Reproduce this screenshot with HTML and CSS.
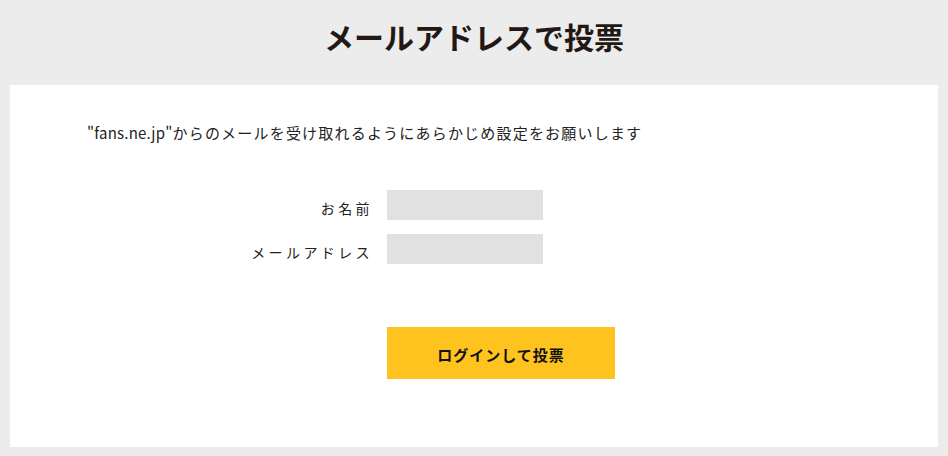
FILE: index.html
```html
<!DOCTYPE html>
<html lang="ja">
<head>
<meta charset="utf-8">
<title>メールアドレスで投票</title>
<link rel="stylesheet" href="styles.css">
</head>
<body>
<header class="page-header">
  <h1 class="page-title">メールアドレスで投票</h1>
</header>
<main class="card">
  <p class="notice"><span class="domain">"fans.ne.jp"</span>からのメールを受け取れるようにあらかじめ設定をお願いします</p>
  <form class="form">
    <label class="label" for="name">お名前</label>
    <input class="input" id="name" type="text">
    <label class="label" for="mail">メールアドレス</label>
    <input class="input" id="mail" type="email">
    <button class="submit" type="button">ログインして投票</button>
  </form>
</main>
</body>
</html>
```
FILE: styles.css
```css
* { box-sizing: border-box; }
html, body { margin: 0; padding: 0; }
body {
  background: #ececec;
  font-family: "Noto Sans CJK JP", "Noto Sans", sans-serif;
  color: #231815;
  height: 456px;
  overflow: hidden;
}
.page-header {
  height: 85px;
  display: flex;
  align-items: center;
  justify-content: center;
}
.page-title {
  margin: 0;
  font-size: 30px;
  font-weight: 700;
  letter-spacing: 0;
  color: #231815;
  padding-bottom: 13px;
}
.card {
  background: #fff;
  margin: 0 10px;
  height: 362px;
  padding: 36px 0 0 77px;
}
.notice {
  margin: 0;
  font-size: 15px;
  line-height: 24px;
  letter-spacing: 1.2px;
  color: #222;
}
.domain {
  letter-spacing: 0.2px;
}
.form {
  margin-top: 45px;
  margin-left: -77px;
  display: grid;
  grid-template-columns: 363px 156px;
  column-gap: 14px;
  row-gap: 14px;
  align-items: center;
}
.label {
  justify-self: end;
  font-size: 14px;
  letter-spacing: 3.4px;
  padding-top: 5px;
  color: #222;
}
.input {
  width: 156px;
  height: 30px;
  border: 0;
  background: #e1e1e1;
  margin: 0;
  padding: 0 8px;
  font: inherit;
}
.submit {
  grid-column: 2;
  margin-top: 49px;
  width: 228px;
  height: 52px;
  border: 0;
  background: #fec31e;
  font-family: inherit;
  font-size: 15px;
  font-weight: 700;
  color: #111;
  letter-spacing: 1px;
  padding: 2px 0 0 0;
}
```
